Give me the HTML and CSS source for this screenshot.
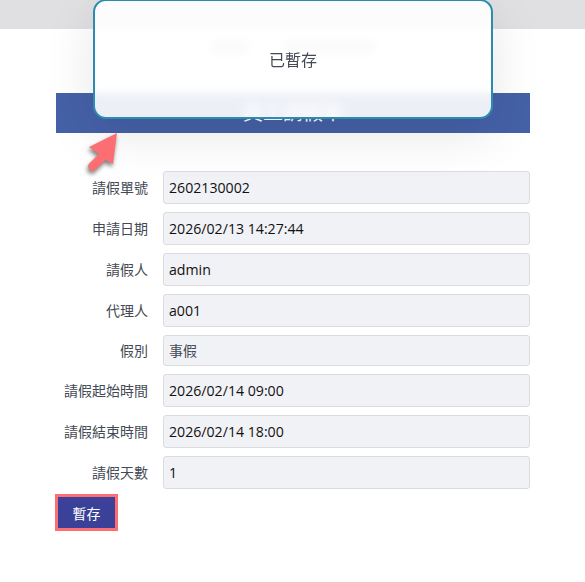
FILE: index.html
```html
<!DOCTYPE html>
<html lang="zh-Hant">

<head>
    <meta charset="UTF-8" />
    <meta name="viewport" content="width=device-width, initial-scale=1.0" />
    <title>員工請假單</title>
    <link rel="stylesheet" href="styles.css">
</head>

<body>
    <div class="topbar"></div>
    <div class="page">
        <!-- header text is only a blur behind the toast -->
        <div class="company">
            <span class="smudge short"></span>
            <span class="smudge long"></span>
        </div>
        <h1 class="banner">員工請假單</h1>
        <form class="form">
            <div class="rows">
                <div class="row">
                    <label>請假單號</label>
                    <div class="field">2602130002</div>
                </div>
                <div class="row">
                    <label>申請日期</label>
                    <div class="field">2026/02/13 14:27:44</div>
                </div>
                <div class="row">
                    <label>請假人</label>
                    <div class="field">admin</div>
                </div>
                <div class="row">
                    <label>代理人</label>
                    <div class="field">a001</div>
                </div>
                <div class="row">
                    <label>假別</label>
                    <div class="field select">事假</div>
                </div>
                <div class="row">
                    <label>請假起始時間</label>
                    <div class="field">2026/02/14 09:00</div>
                </div>
                <div class="row">
                    <label>請假結束時間</label>
                    <div class="field">2026/02/14 18:00</div>
                </div>
                <div class="row">
                    <label>請假天數</label>
                    <div class="field">1</div>
                </div>
            </div>
            <button type="button" class="save">暫存</button>
        </form>
    </div>

    <div class="toast">已暫存</div>

    <!-- annotation arrow -->
    <svg class="arrow" width="50" height="56" viewBox="0 0 50 56">
        <path d="M36 2 L8 16 L18 23 L8.3 32.4 A4.5 4.5 0 0 0 14.3 39 L24.5 29 L32 33 Z" fill="#fb6f72" />
    </svg>
</body>

</html>
```

FILE: styles.css
```css
* {
    box-sizing: border-box;
    margin: 0;
    padding: 0;
}

body {
    font-family: "Open Sans", "Noto Sans CJK TC", sans-serif;
    background: #fff;
    color: #212529;
    font-size: 14px;
}

.topbar {
    height: 29px;
    background: #e0e0e2;
}

.page {
    padding: 0 55px 0 56px;
}

.company {
    height: 64px;
    padding-top: 11px;
    display: flex;
    justify-content: center;
    gap: 34px;
}

.smudge {
    height: 14px;
    background: #cfcfd3;
}

.smudge.short {
    width: 38px;
}

.smudge.long {
    width: 92px;
}

.banner {
    height: 40px;
    line-height: 40px;
    background: #4561a7;
    color: #fff;
    text-align: center;
    font-size: 20px;
    font-weight: 400;
}

.form {
    padding-top: 38px;
}

.rows {
    display: flex;
    flex-direction: column;
    gap: 8px;
}

.row {
    display: flex;
    align-items: center;
    gap: 15px;
}

.row label {
    width: 92px;
    text-align: right;
    color: #444a55;
    font-size: 14px;
    line-height: 20px;
}

.field {
    flex: 1;
    height: 33px;
    line-height: 32px;
    padding: 0 5px;
    background: #f1f2f6;
    border: 1px solid #dcdcdf;
    border-radius: 3px;
    color: #111;
    font-size: 14.15px;
}

.field.select {
    height: 31px;
    line-height: 29px;
    color: #444a55;
    font-size: 14px;
}

.save {
    display: block;
    margin: 5px 0 0 -1px;
    width: 63px;
    height: 37px;
    background: #3b4199;
    border: 3px solid #fb6f72;
    color: #fff;
    font-family: inherit;
    font-size: 14px;
}

.toast {
    position: absolute;
    top: -1px;
    left: 93px;
    width: 400px;
    height: 120px;
    display: flex;
    align-items: center;
    justify-content: center;
    background: rgba(255, 255, 255, 0.9);
    backdrop-filter: blur(4px);
    border: 2px solid #2a8cb0;
    border-radius: 13px;
    box-shadow: 0 15px 50px rgba(0, 0, 0, 0.1);
    color: #444a55;
    font-size: 16px;
}

.arrow {
    position: absolute;
    top: 131px;
    left: 81px;
    filter: drop-shadow(-1px 3px 2px rgba(0, 0, 0, 0.5));
}
```
